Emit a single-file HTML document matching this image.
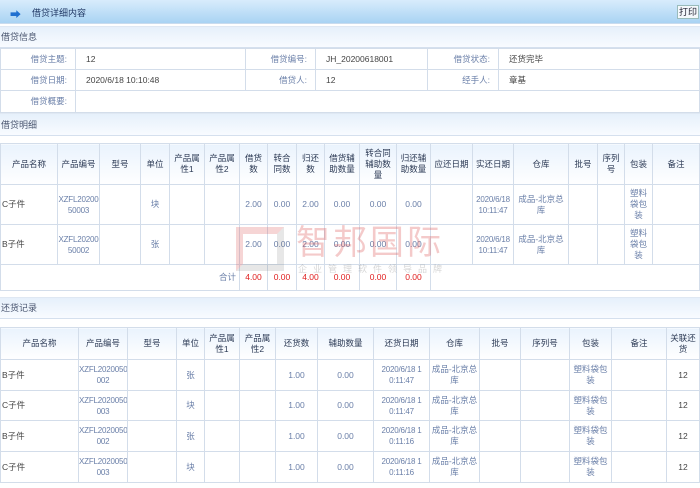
<!DOCTYPE html>
<html><head><meta charset="utf-8"><style>
*{margin:0;padding:0;box-sizing:border-box}
body{width:700px;height:488px;overflow:hidden;background:#fff;font-family:"Liberation Sans","Noto Sans CJK SC",sans-serif;font-size:8.5px;color:#444;position:relative}
.top{position:absolute;left:0;top:0;width:700px;height:24px;background:linear-gradient(#d8ecfc,#a9d3f3);border-bottom:1px solid #c9dbee}
.top .t{position:absolute;left:32px;top:6px;font-size:9px;color:#223a66}
.top .ar{position:absolute;left:10px;top:6px;color:#1f6fd0;font-size:11px;font-weight:bold}
.top .pr{position:absolute;right:1px;top:5px;width:22px;height:14px;border:1px solid #9bb;background:#f4f8fc;font-size:9px;text-align:center;line-height:12px;color:#223}
.bar{position:absolute;left:0;width:700px;background:linear-gradient(#e6f0fb,#f8fbff);border-top:1px solid #dfe8f3;border-bottom:1px solid #d5e0ee;color:#4a5670;padding-left:1px;font-size:9px}
table{position:absolute;left:0;border-collapse:collapse;table-layout:fixed}
td,th{border:1px solid #d3ddea;font-weight:normal;text-align:center;vertical-align:middle;line-height:11px;overflow:hidden;word-break:break-all}
th{background:linear-gradient(#eaf3fd,#fff);color:#2c3a55;padding:0 3px}
td{padding:0}
.lb{color:#6a7fa8;text-align:right;padding-right:8px}
.v{text-align:left;padding-left:10px;color:#444}
.b{color:#6a7fa8}
.c{color:#6a7fa8;font-size:8px;letter-spacing:-0.2px;white-space:nowrap}
.r{color:#e02020}
.l{text-align:left;color:#444;padding-left:1px}
</style></head><body>
<div class="top"><span class="ar">➡</span><span class="t">借贷详细内容</span><div class="pr">打印</div></div>
<div class="bar" style="top:26px;height:22px;line-height:20px">借贷信息</div>
<table style="top:48px;width:700px">
<colgroup><col style="width:75px"><col style="width:170px"><col style="width:70px"><col style="width:112px"><col style="width:71px"><col></colgroup>
<tr style="height:21px"><td class="lb">借贷主题:</td><td class="v">12</td><td class="lb">借贷编号:</td><td class="v" style="padding-left:10px">JH_20200618001</td><td class="lb">借贷状态:</td><td class="v">还货完毕</td></tr>
<tr style="height:21px"><td class="lb">借贷日期:</td><td class="v">2020/6/18 10:10:48</td><td class="lb">借贷人:</td><td class="v">12</td><td class="lb">经手人:</td><td class="v">章基</td></tr>
<tr style="height:22px"><td class="lb">借贷概要:</td><td colspan="5"></td></tr>
</table>
<div class="bar" style="top:113px;height:23px;line-height:22px">借贷明细</div>
<table style="top:143px;width:700px">
<colgroup><col style="width:57px"><col style="width:42px"><col style="width:41px"><col style="width:29px"><col style="width:35px"><col style="width:35px"><col style="width:28px"><col style="width:29px"><col style="width:28px"><col style="width:35px"><col style="width:37px"><col style="width:34px"><col style="width:42px"><col style="width:41px"><col style="width:55px"><col style="width:29px"><col style="width:27px"><col style="width:28px"><col></colgroup>
<tr style="height:41px"><th>产品名称</th><th>产品编号</th><th>型号</th><th>单位</th><th>产品属性1</th><th>产品属性2</th><th>借货数</th><th>转合同数</th><th>归还数</th><th>借货辅助数量</th><th>转合同辅助数量</th><th>归还辅助数量</th><th>应还日期</th><th>实还日期</th><th>仓库</th><th>批号</th><th>序列号</th><th>包装</th><th>备注</th></tr>
<tr style="height:40px"><td class="l">C子件</td><td class="c">XZFL20200<br>50003</td><td></td><td class="b">块</td><td></td><td></td><td class="b">2.00</td><td class="b">0.00</td><td class="b">2.00</td><td class="b">0.00</td><td class="b">0.00</td><td class="b">0.00</td><td></td><td class="c">2020/6/18<br>10:11:47</td><td class="b">成品-北京总<br>库</td><td></td><td></td><td class="b">塑料<br>袋包<br>装</td><td></td></tr>
<tr style="height:40px"><td class="l">B子件</td><td class="c">XZFL20200<br>50002</td><td></td><td class="b">张</td><td></td><td></td><td class="b">2.00</td><td class="b">0.00</td><td class="b">2.00</td><td class="b">0.00</td><td class="b">0.00</td><td class="b">0.00</td><td></td><td class="c">2020/6/18<br>10:11:47</td><td class="b">成品-北京总<br>库</td><td></td><td></td><td class="b">塑料<br>袋包<br>装</td><td></td></tr>
<tr style="height:26px"><td colspan="6" class="b" style="text-align:right;padding-right:3px">合计</td><td class="r">4.00</td><td class="r">0.00</td><td class="r">4.00</td><td class="r">0.00</td><td class="r">0.00</td><td class="r">0.00</td><td colspan="7"></td></tr>
</table>
<div class="bar" style="top:297px;height:22px;line-height:20px">还货记录</div>
<table style="top:327px;width:700px">
<colgroup><col style="width:78px"><col style="width:49px"><col style="width:49px"><col style="width:28px"><col style="width:35px"><col style="width:36px"><col style="width:42px"><col style="width:56px"><col style="width:56px"><col style="width:50px"><col style="width:41px"><col style="width:49px"><col style="width:42px"><col style="width:55px"><col></colgroup>
<tr style="height:32px"><th>产品名称</th><th>产品编号</th><th>型号</th><th>单位</th><th>产品属性1</th><th>产品属性2</th><th>还货数</th><th>辅助数量</th><th>还货日期</th><th>仓库</th><th>批号</th><th>序列号</th><th>包装</th><th>备注</th><th>关联还货</th></tr>
<tr style="height:31px"><td class="l">B子件</td><td class="c">XZFL2020050<br>002</td><td></td><td class="b">张</td><td></td><td></td><td class="b">1.00</td><td class="b">0.00</td><td class="c">2020/6/18 1<br>0:11:47</td><td class="b">成品-北京总<br>库</td><td></td><td></td><td class="b">塑料袋包<br>装</td><td></td><td>12</td></tr>
<tr style="height:30px"><td class="l">C子件</td><td class="c">XZFL2020050<br>003</td><td></td><td class="b">块</td><td></td><td></td><td class="b">1.00</td><td class="b">0.00</td><td class="c">2020/6/18 1<br>0:11:47</td><td class="b">成品-北京总<br>库</td><td></td><td></td><td class="b">塑料袋包<br>装</td><td></td><td>12</td></tr>
<tr style="height:31px"><td class="l">B子件</td><td class="c">XZFL2020050<br>002</td><td></td><td class="b">张</td><td></td><td></td><td class="b">1.00</td><td class="b">0.00</td><td class="c">2020/6/18 1<br>0:11:16</td><td class="b">成品-北京总<br>库</td><td></td><td></td><td class="b">塑料袋包<br>装</td><td></td><td>12</td></tr>
<tr style="height:31px"><td class="l">C子件</td><td class="c">XZFL2020050<br>003</td><td></td><td class="b">块</td><td></td><td></td><td class="b">1.00</td><td class="b">0.00</td><td class="c">2020/6/18 1<br>0:11:16</td><td class="b">成品-北京总<br>库</td><td></td><td></td><td class="b">塑料袋包<br>装</td><td></td><td>12</td></tr>
</table>
<div style="position:absolute;left:236px;top:227px;width:48px;height:44px;border:7px solid rgba(220,90,90,0.25);border-right-color:rgba(120,120,120,0.18);border-bottom-color:rgba(120,120,120,0.18)"></div>
<div style="position:absolute;left:296px;top:220px;font-size:34px;line-height:40px;color:rgba(220,80,80,0.3);letter-spacing:3px;font-family:'Noto Sans CJK SC',sans-serif">智邦国际</div>
<div style="position:absolute;left:298px;top:263px;font-size:9px;line-height:12px;color:rgba(120,120,120,0.3);letter-spacing:6px">企业管理软件领导品牌</div>
</body></html>
